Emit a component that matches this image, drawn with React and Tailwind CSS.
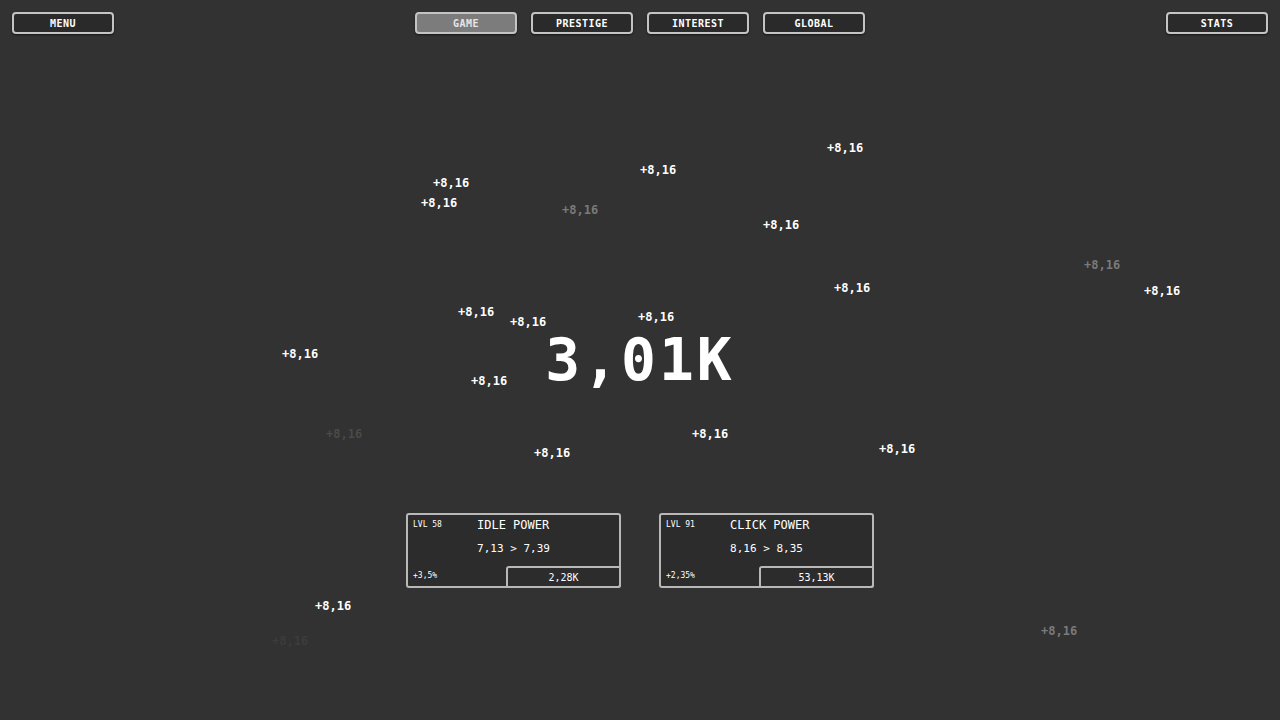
import React from "react";

const font = { fontFamily: '"DejaVu Sans Mono", "Liberation Mono", monospace' };

const floats = [
  [827, 147, "w"], [640, 169, "w"], [433, 182, "w"], [421, 202, "w"], [562, 209, "d"],
  [763, 224, "w"], [1084, 264, "d"], [1144, 290, "w"], [834, 287, "w"], [458, 311, "w"],
  [510, 321, "w"], [638, 316, "w"], [282, 353, "w"], [471, 380, "w"], [326, 433, "v"],
  [692, 433, "w"], [534, 452, "w"], [879, 448, "w"], [315, 605, "w"], [1041, 630, "d"],
  [272, 640, "x"],
];

const colorFor = {
  w: "text-white",
  d: "text-[#7a7a7a]",
  v: "text-[#4a4a4a]",
  x: "text-[#3c3c3c]",
};

function NavButton({ label, active }) {
  return (
    <div
      className={`w-[102px] h-[22px] flex items-center justify-center rounded-[4px] border-2 border-[#c4c4c4] text-[10px] font-bold tracking-[0.5px] shadow-[0_1px_2px_rgba(0,0,0,0.6)] ${
        active ? "bg-[#7c7c7c] text-[#e6e6e6]" : "bg-[#2a2a2a] text-white"
      }`}
    >
      {label}
    </div>
  );
}

function Card({ lvl, title, values, pct, cost }) {
  return (
    <div className="w-[215px] h-[75px] rounded-[3px] border-2 border-[#b8b8b8] bg-[#2c2c2c] flex flex-col text-white">
      <div className="flex items-center h-[17px] mt-[1px] px-[5px]">
        <span className="text-[8px] w-[64px]">{lvl}</span>
        <span className="text-[12px]">{title}</span>
      </div>
      <div className="flex items-center justify-center h-[33px] text-[11px]">{values}</div>
      <div className="flex flex-1 items-stretch">
        <div className="w-[98px] flex items-center px-[5px] text-[8px]">{pct}</div>
        <div className="flex-1 -mr-[2px] -mb-[2px] rounded-tl-[3px] rounded-br-[3px] border-2 border-[#b8b8b8] flex items-center justify-center text-[10px]">
          {cost}
        </div>
      </div>
    </div>
  );
}

export default function App() {
  return (
    <div className="relative w-full h-[720px] bg-[#323232] overflow-hidden" style={font}>
      {floats.map(([x, y, c], i) => (
        <span
          key={i}
          className={`absolute text-[12px] font-bold leading-none ${colorFor[c]}`}
          style={{ left: x, top: y - 5 }}
        >
          +8,16
        </span>
      ))}
      <div className="relative flex flex-col">
        <div className="flex items-center justify-between px-3 pt-3">
          <NavButton label="MENU" />
          <div className="flex gap-[14px]">
            <NavButton label="GAME" active />
            <NavButton label="PRESTIGE" />
            <NavButton label="INTEREST" />
            <NavButton label="GLOBAL" />
          </div>
          <NavButton label="STATS" />
        </div>
        <div className="mt-[297px] flex justify-center">
          <span className="text-[58px] leading-none font-bold text-white tracking-[3px]">3,01K</span>
        </div>
        <div className="mt-[124px] flex justify-center gap-[38px]">
          <Card lvl="LVL 58" title="IDLE POWER" values="7,13 > 7,39" pct="+3,5%" cost="2,28K" />
          <Card lvl="LVL 91" title="CLICK POWER" values="8,16 > 8,35" pct="+2,35%" cost="53,13K" />
        </div>
      </div>
    </div>
  );
}
